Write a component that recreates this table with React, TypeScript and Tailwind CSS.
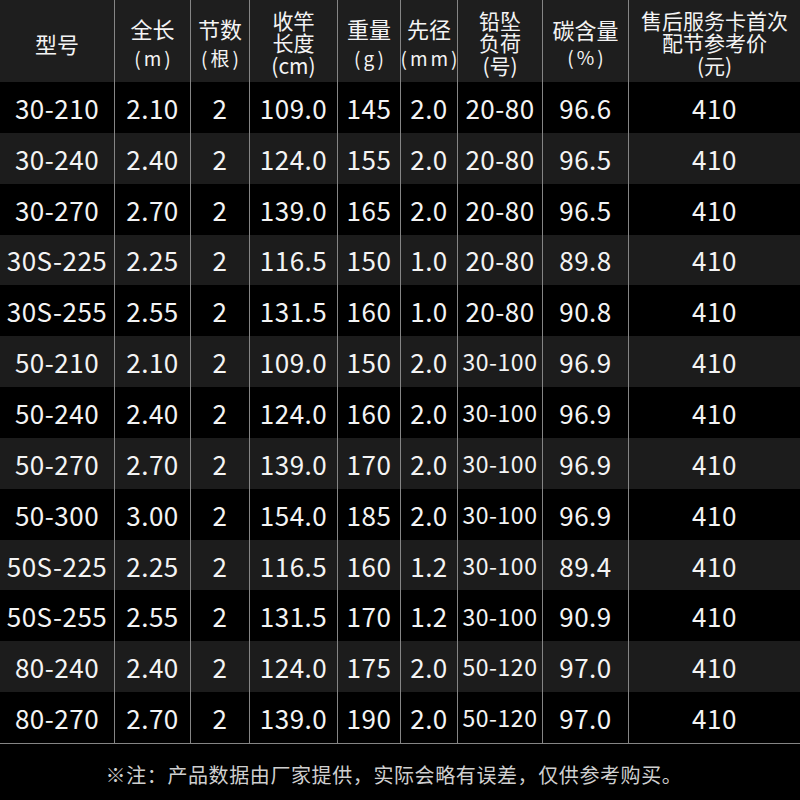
const cols = "grid grid-cols-[115px_76px_59px_88px_63px_57px_85px_86px_171px]";

const rows = [
  ["30-210", "2.10", "2", "109.0", "145", "2.0", "20-80", "96.6", "410"],
  ["30-240", "2.40", "2", "124.0", "155", "2.0", "20-80", "96.5", "410"],
  ["30-270", "2.70", "2", "139.0", "165", "2.0", "20-80", "96.5", "410"],
  ["30S-225", "2.25", "2", "116.5", "150", "1.0", "20-80", "89.8", "410"],
  ["30S-255", "2.55", "2", "131.5", "160", "1.0", "20-80", "90.8", "410"],
  ["50-210", "2.10", "2", "109.0", "150", "2.0", "30-100", "96.9", "410"],
  ["50-240", "2.40", "2", "124.0", "160", "2.0", "30-100", "96.9", "410"],
  ["50-270", "2.70", "2", "139.0", "170", "2.0", "30-100", "96.9", "410"],
  ["50-300", "3.00", "2", "154.0", "185", "2.0", "30-100", "96.9", "410"],
  ["50S-225", "2.25", "2", "116.5", "160", "1.2", "30-100", "89.4", "410"],
  ["50S-255", "2.55", "2", "131.5", "170", "1.2", "30-100", "90.9", "410"],
  ["80-240", "2.40", "2", "124.0", "175", "2.0", "50-120", "97.0", "410"],
  ["80-270", "2.70", "2", "139.0", "190", "2.0", "50-120", "97.0", "410"],
];

// header cells: two-line ones keep the unit on its own smaller line,
// three-line ones are a single block of text
const head: { title: string; unit?: string; lh: string }[] = [
  { title: "型号", lh: "text-[22px] leading-[28px]" },
  { title: "全长", unit: "(m)", lh: "text-[22px] leading-[29px]" },
  { title: "节数", unit: "(根)", lh: "text-[22px] leading-[29px]" },
  { title: "收竿\n长度\n(cm)", lh: "text-[21px] leading-[22.5px]" },
  { title: "重量", unit: "(g)", lh: "text-[22px] leading-[30px]" },
  { title: "先径", unit: "(mm)", lh: "text-[22px] leading-[29px]" },
  { title: "铅坠\n负荷\n(号)", lh: "text-[21px] leading-[22.5px]" },
  { title: "碳含量", unit: "(%)", lh: "text-[22px] leading-[28px]" },
  { title: "售后服务卡首次\n配节参考价\n(元)", lh: "text-[21px] leading-[22.5px]" },
];

export default function App() {
  return (
    <div
      className="w-[800px] h-[800px] bg-black text-[#f4f4f4] overflow-hidden"
      style={{ fontFamily: '"Noto Sans CJK SC", "Noto Sans", sans-serif' }}
    >
      <div className={`${cols} h-[82px] bg-[#1e1e1e]`}>
        {head.map((h, i) => (
          <div
            key={i}
            className={`flex flex-col items-center justify-center pt-[3px] ${h.lh} ${i < 8 ? "border-r border-[#858585]" : ""}`}
          >
            <span className="whitespace-pre-line text-center">{h.title}</span>
            {h.unit && <span className="text-[19px] tracking-[3px] pl-[3px]">{h.unit}</span>}
          </div>
        ))}
      </div>

      <div className="border-b border-[#858585]">
        {rows.map((r, ri) => (
          <div key={ri} className={`${cols} h-[50.85px] ${ri % 2 ? "bg-[#1c1c1c]" : "bg-black"}`}>
            {r.map((c, ci) => (
              <div
                key={ci}
                className={`flex items-center justify-center tracking-[0.5px] ${c.length === 6 && ci === 6 ? "text-[23px]" : "text-[26px]"} ${ci < 8 ? "border-r border-[#858585]" : ""}`}
              >
                {c}
              </div>
            ))}
          </div>
        ))}
      </div>

      <div className="flex justify-center pt-[16px] pr-[12px] text-[20px] tracking-[0.6px] text-[#cfcfcf]">
        ※注：产品数据由厂家提供，实际会略有误差，仅供参考购买。
      </div>
    </div>
  );
}
